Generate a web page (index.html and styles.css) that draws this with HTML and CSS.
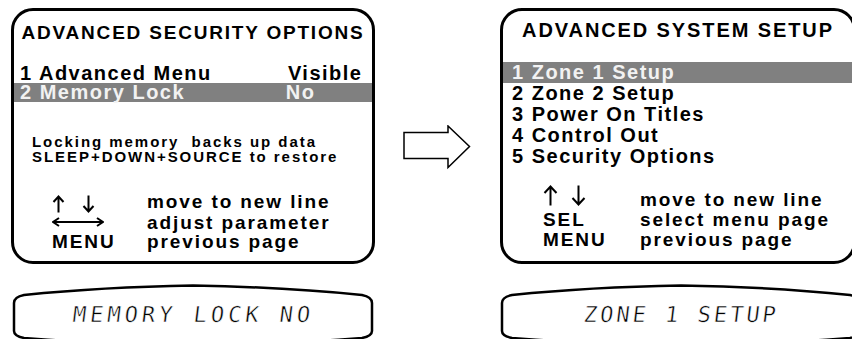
FILE: index.html
```html
<!DOCTYPE html>
<html>
<head>
    <title>Advanced Setup Menus</title>
    <link rel="stylesheet" href="styles.css">
</head>
<body>

<div class="stage">
    <div class="screens">
        <div class="panel panel-left">
            <h1 class="title title-left">ADVANCED SECURITY OPTIONS</h1>
            <div class="items items-left">
                <div class="item"><span>1 Advanced Menu</span><span>Visible</span></div>
                <div class="item selected"><span>2 Memory Lock</span><span class="value-no">No</span></div>
            </div>
            <p class="note">Locking memory&nbsp; backs up data<br>SLEEP+DOWN+SOURCE to restore</p>
            <div class="legend legend-left">
                <div class="key key-updown">
                    <svg class="arrow-up" width="13" height="18" viewBox="0 0 13 18"><path d="M6.5 17.5V1.5M1.5 7L6.5 1.5L11.5 7" fill="none" stroke="#000" stroke-width="2"/></svg>
                    <svg class="arrow-down" width="13" height="18" viewBox="0 0 13 18"><path d="M6.5 0.5V16.5M1.5 11L6.5 16.5L11.5 11" fill="none" stroke="#000" stroke-width="2"/></svg>
                </div>
                <div class="desc">move to new line</div>
                <div class="key key-leftright">
                    <svg width="52" height="10" viewBox="0 0 52 10"><path d="M1 5H51M7 1L1 5L7 9M45 1L51 5L45 9" fill="none" stroke="#000" stroke-width="2"/></svg>
                </div>
                <div class="desc">adjust parameter</div>
                <div class="key">MENU</div>
                <div class="desc">previous page</div>
            </div>
        </div>

        <div class="next">
            <svg width="68" height="45" viewBox="0 0 68 45"><path d="M1 7.5H45V1L66.5 21.5L45 42.5V33.5H1Z" fill="#fff" stroke="#000" stroke-width="1.5"/></svg>
        </div>

        <div class="panel panel-right">
            <h1 class="title title-right">ADVANCED SYSTEM SETUP</h1>
            <div class="items items-right">
                <div class="item selected">1 Zone 1 Setup</div>
                <div class="item">2 Zone 2 Setup</div>
                <div class="item">3 Power On Titles</div>
                <div class="item">4 Control Out</div>
                <div class="item">5 Security Options</div>
            </div>
            <div class="legend legend-right">
                <div class="key key-updown">
                    <svg class="arrow-up" width="15" height="21" viewBox="0 0 15 21"><path d="M7.5 20.5V1.5M1.5 8L7.5 1.5L13.5 8" fill="none" stroke="#000" stroke-width="2"/></svg>
                    <svg class="arrow-down" width="15" height="21" viewBox="0 0 15 21"><path d="M7.5 0.5V19.5M1.5 13L7.5 19.5L13.5 13" fill="none" stroke="#000" stroke-width="2"/></svg>
                </div>
                <div class="desc">move to new line</div>
                <div class="key">SEL</div>
                <div class="desc">select menu page</div>
                <div class="key">MENU</div>
                <div class="desc">previous page</div>
            </div>
        </div>
    </div>

    <div class="displays">
        <div class="lcd">
            <svg width="362" height="56" viewBox="0 0 362 56"><path d="M2 19Q2 13 12 11Q90 3 181 1.5Q272 3 350 11Q360 13 360 19V47Q360 52 350 54Q272 60 181 62Q90 60 12 54Q2 52 2 47Z" fill="none" stroke="#000" stroke-width="2.5"/></svg>
            <span class="lcd-text lcd-text-long">MEMORY LOCK NO</span>
        </div>
        <div class="lcd">
            <svg width="362" height="56" viewBox="0 0 362 56"><path d="M2 19Q2 13 12 11Q90 3 181 1.5Q272 3 350 11Q360 13 360 19V47Q360 52 350 54Q272 60 181 62Q90 60 12 54Q2 52 2 47Z" fill="none" stroke="#000" stroke-width="2.5"/></svg>
            <span class="lcd-text lcd-text-short">ZONE 1 SETUP</span>
        </div>
    </div>
</div>

</body>
</html>
```

FILE: styles.css
```css
html,
body {
    overflow: hidden;
}

body {
    margin: 0;
    background-color: #fff;
    color: #000;
    font-family: "Liberation Sans", Arial, sans-serif;
    font-weight: bold;
}

.stage {
    width: 900px;
    padding-top: 8px;
}

.screens {
    display: flex;
    align-items: flex-start;
}

.panel {
    box-sizing: border-box;
    height: 256px;
    flex-shrink: 0;
    border: 3px solid #000;
    border-radius: 22px;
    display: flex;
    flex-direction: column;
}

.panel-left {
    width: 364px;
    margin-left: 11px;
    padding-top: 11.4px;
}

.panel-right {
    width: 356px;
    padding-top: 8.1px;
}

.title {
    margin: 0;
    text-align: center;
    line-height: 22px;
    font-weight: bold;
}

.title-left {
    font-size: 19px;
    letter-spacing: 1.8px;
}

.title-right {
    font-size: 20px;
    letter-spacing: 1.9px;
}

.item {
    font-size: 20px;
    letter-spacing: 1.5px;
}

.items-left {
    margin-top: 19.2px;
}

.items-left .item {
    display: flex;
    justify-content: space-between;
    line-height: 19px;
    padding: 0 9.5px 0 6px;
}

.value-no {
    padding-right: 47px;
}

.items-right {
    margin-top: 20.5px;
}

.items-right .item {
    line-height: 21px;
    padding-left: 9px;
}

.selected {
    background-color: #808080;
    color: #f2f2f2;
}

.note {
    margin: 32.7px 0 0;
    padding-left: 18px;
    font-size: 15px;
    line-height: 15px;
    letter-spacing: 1.95px;
}

.legend {
    display: grid;
    font-size: 19px;
    letter-spacing: 1.9px;
}

.legend-left {
    grid-template-columns: 95px auto;
    margin-top: 27.4px;
    padding-left: 38px;
    line-height: 19.5px;
}

.legend-right {
    grid-template-columns: 97px auto;
    margin-top: 23.8px;
    padding-left: 40px;
    line-height: 20px;
}

.key-updown {
    display: flex;
    gap: 17px;
}

.key-updown svg {
    display: block;
}

.legend-left .key-updown svg {
    margin-top: 3px;
}

.legend-right .key-updown {
    gap: 13px;
}

.legend-right .key-updown svg {
    margin-top: -5px;
}

.key-leftright {
    display: flex;
    align-items: center;
}

.key-leftright svg {
    display: block;
}

.next {
    width: 125px;
    flex-shrink: 0;
}

.next svg {
    display: block;
    margin: 117px 0 0 28px;
}

.displays {
    display: flex;
    gap: 126px;
    margin-top: 20px;
    padding-left: 12px;
}

.lcd {
    display: grid;
    width: 362px;
    height: 56px;
    flex-shrink: 0;
}

.lcd svg,
.lcd-text {
    grid-area: 1 / 1;
}

.lcd svg {
    display: block;
}

.lcd-text {
    justify-self: center;
    align-self: start;
    padding-top: 20.2px;
    font-family: "DejaVu Sans Mono", monospace;
    font-weight: normal;
    font-size: 22px;
    line-height: 22px;
    transform: skewX(-7deg);
    -webkit-text-stroke: 0.5px #fff;
}

.lcd-text-long {
    letter-spacing: 4px;
    padding-left: 4px;
}

.lcd-text-short {
    letter-spacing: 3px;
    padding-left: 3px;
}
```
